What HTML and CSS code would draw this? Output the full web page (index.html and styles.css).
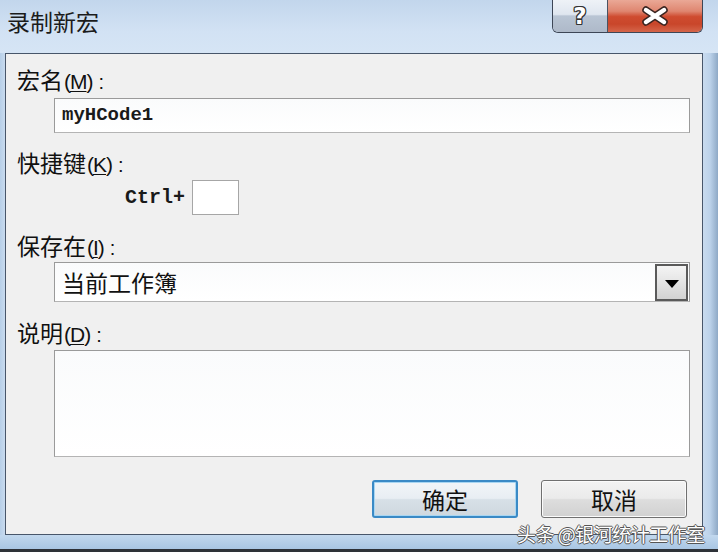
FILE: index.html
```html
<!DOCTYPE html>
<html lang="zh">
<head>
<meta charset="utf-8">
<title>录制新宏</title>
<link rel="stylesheet" href="styles.css">
</head>
<body>
<div class="window">
  <div class="titlebar">
    <div class="title">录制新宏</div>
    <div class="caption-btns">
      <div class="cbtn help"><span class="qmark">?</span></div>
      <div class="cbtn close">
        <svg width="28" height="20" viewBox="0 0 28 20">
          <path d="M5 4 L23 16 M23 4 L5 16" stroke="#3a2420" stroke-width="7.5" stroke-linecap="round" fill="none"/>
          <path d="M5 4 L23 16 M23 4 L5 16" stroke="#ffffff" stroke-width="4.5" stroke-linecap="round" fill="none"/>
        </svg>
      </div>
    </div>
  </div>
  <div class="client">
    <div class="label l1">宏名<span class="acc">(<u>M</u>)</span><span class="colon">:</span></div>
    <div class="textbox name">myHCode1</div>
    <div class="label l2">快捷键<span class="acc">(<u>K</u>)</span><span class="colon">:</span></div>
    <div class="ctrl-row">
      <span class="ctrl">Ctrl+</span>
      <div class="keybox"></div>
    </div>
    <div class="label l3">保存在<span class="acc">(<u>I</u>)</span><span class="colon">:</span></div>
    <div class="combo">
      <span class="combo-text">当前工作簿</span>
      <div class="drop">
        <svg width="14" height="8" viewBox="0 0 14 8"><path d="M0 0 H14 L7 8 Z" fill="#000"/></svg>
      </div>
    </div>
    <div class="label l4">说明<span class="acc">(<u>D</u>)</span><span class="colon">:</span></div>
    <div class="textarea"></div>
    <div class="btn-row">
      <div class="btn ok">确定</div>
      <div class="btn cancel">取消</div>
    </div>
  </div>
  <div class="bottom-frame"></div>
  <div class="dark-strip"></div>
  <div class="watermark">头条 @银河统计工作室</div>
</div>
</body>
</html>
```

FILE: styles.css
```css
* { box-sizing: border-box; }
html, body { margin: 0; padding: 0; }
body {
  width: 718px;
  height: 552px;
  overflow: hidden;
  font-family: "Noto Sans CJK SC", "Noto Sans", sans-serif;
  color: #111;
}
.window {
  position: relative;
  width: 718px;
  height: 552px;
  display: flex;
  flex-direction: column;
  background: linear-gradient(90deg, #b7cfe8 0px, #c9dbef 5px, #c9dbef 703px, #bcd2ea 710px, #8ea9c6 718px);
}
.titlebar {
  height: 53px;
  display: flex;
  justify-content: space-between;
  align-items: flex-start;
  background: linear-gradient(180deg, #c2d6ec 0%, #d2e2f4 60%, #d6e5f5 100%);
}
.title {
  padding-left: 7px;
  padding-top: 5px;
  font-size: 23px;
  line-height: 32px;
  color: #1b1b1b;
}
.caption-btns {
  display: flex;
  margin-right: 15px;
  height: 33px;
  border: 1px solid #3d4656;
  border-top: none;
  border-radius: 0 0 6px 6px;
  overflow: hidden;
}
.cbtn {
  height: 32px;
  display: flex;
  align-items: center;
  justify-content: center;
}
.help {
  width: 55px;
  border-right: 1px solid #4a5362;
  background: linear-gradient(180deg, #eef2f7 0%, #dfe6ef 45%, #b9c5d4 50%, #aeb9c9 100%);
}
.qmark {
  font-family: "DejaVu Sans", sans-serif;
  font-weight: bold;
  font-size: 23px;
  line-height: 1;
  color: #fff;
  margin-top: 1px;
  text-shadow: 1px 0 0 #333, -1px 0 0 #333, 0 1px 0 #333, 0 -1px 0 #333,
    1px 1px 0 #333, -1px -1px 0 #333, 1px -1px 0 #333, -1px 1px 0 #333;
}
.close {
  width: 94px;
  background: linear-gradient(180deg, #eaa896 0%, #df8670 35%, #cf4c30 52%, #c9462a 75%, #d5654a 100%);
}
.client {
  margin: 0 15px 0 5px;
  height: 482px;
  border: 1px solid #48566a;
  background: #f0f0f0;
  display: flex;
  flex-direction: column;
  padding: 12px 12px 0 11px;
}
.label {
  font-size: 23px;
  line-height: 26px;
  height: 26px;
  color: #111;
  white-space: nowrap;
}
.acc {
  font-family: "Liberation Sans", sans-serif;
  font-size: 21px;
  margin-left: 1px;
  letter-spacing: -1px;
}
.acc u { text-decoration-thickness: 1px; text-underline-offset: 2px; }
.colon {
  font-family: "Liberation Sans", sans-serif;
  font-size: 20px;
  margin-left: 6px;
}
.textbox, .combo, .textarea {
  margin-left: 37px;
  background: linear-gradient(180deg, #fafbfc, #ffffff);
  border: 1px solid #9a9a9a;
  border-bottom-color: #b4b4b4;
}
.name {
  margin-top: 6px;
  height: 35px;
  padding-left: 7px;
  font-family: "Liberation Mono", monospace;
  font-weight: bold;
  font-size: 19px;
  line-height: 33px;
  color: #1a1a1a;
}
.l2 { margin-top: 16px; }
.ctrl-row {
  margin-top: 5px;
  height: 35px;
  display: flex;
  align-items: center;
  padding-left: 108px;
}
.ctrl {
  font-family: "Liberation Mono", monospace;
  font-weight: bold;
  font-size: 20px;
  color: #1a1a1a;
  width: 67px;
}
.keybox {
  width: 47px;
  height: 35px;
  background: #fff;
  border: 1px solid #a6a6a6;
}
.l3 { margin-top: 17px; }
.combo {
  margin-top: 4px;
  height: 40px;
  display: flex;
  align-items: center;
  justify-content: space-between;
  padding: 0 1px 0 7px;
}
.combo-text {
  font-size: 23px;
  line-height: 30px;
}
.drop {
  width: 33px;
  height: 37px;
  border: 2px solid #5a5a5a;
  background: linear-gradient(180deg, #f4f4f4 0%, #e4e4e4 50%, #d2d2d2 100%);
  display: flex;
  align-items: center;
  justify-content: center;
  padding-top: 4px;
}
.l4 { margin-top: 17px; }
.textarea {
  margin-top: 5px;
  height: 107px;
}
.btn-row {
  margin-top: 23px;
  display: flex;
  justify-content: flex-end;
  gap: 23px;
  padding-right: 3px;
}
.btn {
  width: 146px;
  height: 38px;
  display: flex;
  align-items: center;
  justify-content: center;
  font-size: 23px;
  color: #111;
  border-radius: 3px;
}
.ok {
  border: 2px solid #3a8ac6;
  box-shadow: inset 0 0 0 1px #a8d6f2;
  background: linear-gradient(180deg, #f1f5f8 0%, #e8eef3 48%, #d7e0e7 52%, #cfd8df 100%);
}
.cancel {
  border: 1px solid #707070;
  box-shadow: inset 0 0 0 1px #fbfbfb;
  background: linear-gradient(180deg, #f3f3f3 0%, #ebebeb 48%, #dddddd 52%, #d1d1d1 100%);
}
.bottom-frame {
  height: 14px;
  background: linear-gradient(180deg, #c2d8ee, #a9c6e3);
}
.dark-strip {
  height: 3px;
  background: #2e3238;
}
.watermark {
  position: absolute;
  left: 517px;
  top: 520px;
  font-size: 19px;
  letter-spacing: -0.5px;
  color: #fff;
  text-shadow: 1px 0 0 #555, -1px 0 0 #555, 0 1px 0 #555, 0 -1px 0 #555;
  white-space: nowrap;
}
```
